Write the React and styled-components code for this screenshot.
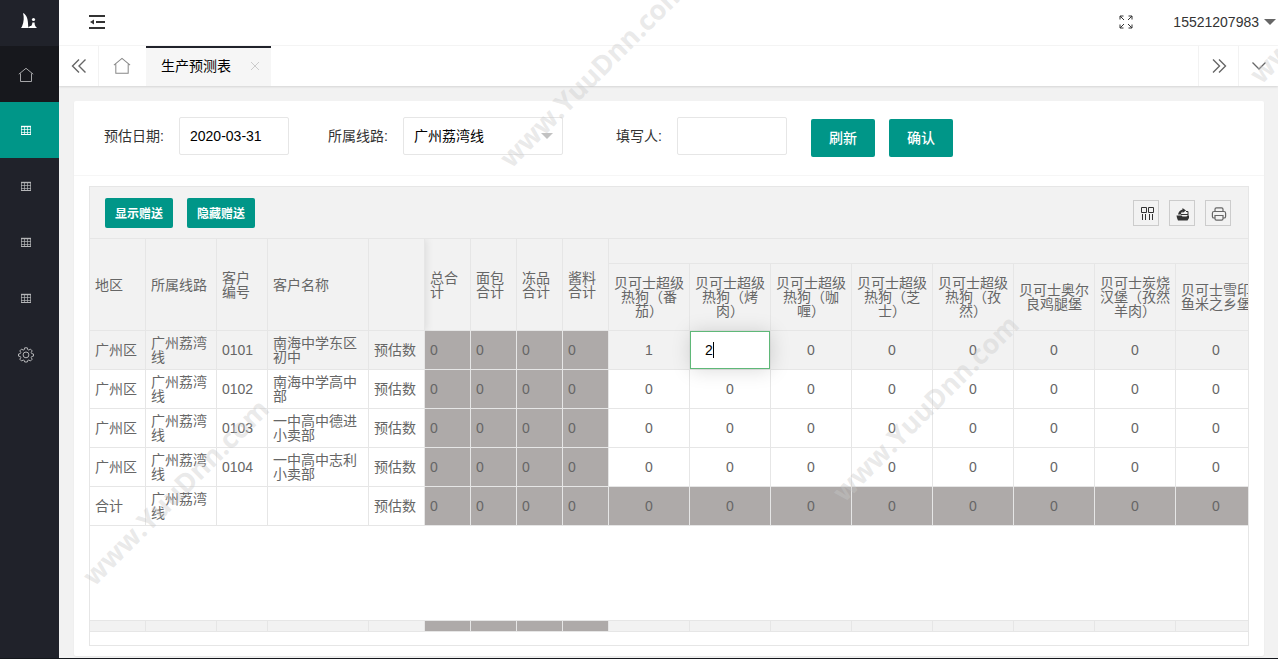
import React from 'react';
import styled, { createGlobalStyle } from 'styled-components';

const GlobalStyle = createGlobalStyle`
  * {
    box-sizing: border-box;
  }
  body {
    margin: 0;
    background: #f2f2f2;
    color: #333;
    font: 14px/24px "Liberation Sans", "Noto Sans CJK SC", sans-serif;
  }
  button, input, select {
    font-family: inherit;
    font-size: 14px;
    margin: 0;
  }
`;

const Page = styled.div`
  position: relative;
  display: flex;
  height: 100vh;
  overflow: hidden;
  border-bottom: 1px solid #14171c;
`;

const Sidebar = styled.nav`
  flex: 0 0 59px;
  background: #20222a;
`;

const Logo = styled.div`
  display: flex;
  align-items: center;
  justify-content: center;
  height: 46px;
  padding: 0 1px 4px 0;
`;

const SideLink = styled.a`
  display: flex;
  align-items: center;
  height: 56px;
  padding: 2px 0 0 18px;
  color: ${props => (props.$active ? '#fff' : '#b5b6b8')};
  background: ${props => (props.$active ? '#009688' : props.$open ? '#17181d' : 'transparent')};
`;

const Main = styled.div`
  flex: 1;
  min-width: 0;
  display: flex;
  flex-direction: column;
`;

const Header = styled.header`
  display: flex;
  align-items: center;
  justify-content: space-between;
  height: 46px;
  padding: 0 2px 2px 30px;
  background: #fff;
  border-bottom: 1px solid #f6f6f6;
`;

const HeaderRight = styled.div`
  display: flex;
  align-items: center;
  gap: 40px;
`;

const IconButton = styled.button`
  display: flex;
  padding: 0;
  border: 0;
  background: none;
  color: #333;
`;

const User = styled.a`
  display: flex;
  align-items: center;
  gap: 5px;
  color: #333;
  text-decoration: none;
`;

const Triangle = styled.span`
  border: 6px solid transparent;
  border-bottom: 0;
  border-top-color: ${props => props.color};
`;

const TabBar = styled.div`
  z-index: 1;
  display: flex;
  height: 40px;
  background: #fff;
  box-shadow: 0 1px 2px rgba(0, 0, 0, .12);
`;

const TabControl = styled.button`
  flex: 0 0 40px;
  display: flex;
  align-items: center;
  justify-content: center;
  padding: 0;
  color: #666;
  background: #fff;
  border: 0;
  border-${props => props.$side}: 1px solid #f2f2f2;
`;

const HomeTab = styled.a`
  flex: 0 0 47px;
  display: flex;
  align-items: center;
  justify-content: center;
  padding-right: 1px;
  color: #888;
`;

const Tab = styled.div`
  display: flex;
  align-items: center;
  gap: 19px;
  padding: 0 11px 2px 15px;
  color: #000;
  background: #f6f6f6;
  border-top: 2px solid #20222a;
`;

const Spacer = styled.div`
  flex: 1;
`;

const Card = styled.section`
  flex: 1;
  min-height: 0;
  display: flex;
  flex-direction: column;
  margin: 15px 14px 2px 15px;
  background: #fff;
  border-radius: 2px;
  box-shadow: 0 1px 2px rgba(0, 0, 0, .05);
`;

const Filters = styled.form`
  display: flex;
  align-items: flex-start;
  gap: 24px;
  padding: 16px 15px 18px 0;
  border-bottom: 1px solid #f6f6f6;
`;

const Field = styled.div`
  display: flex;

  &:first-child {
    margin-left: 15px;
  }
`;

const Label = styled.label`
  width: 90px;
  padding: 0 15px;
  line-height: 38px;
  text-align: right;
  white-space: nowrap;
`;

const Input = styled.input`
  width: 110px;
  height: 38px;
  padding: 0 10px;
  color: #000;
  background: #fff;
  border: 1px solid #e6e6e6;
  border-radius: 2px;
  outline: 0;
`;

const SelectBox = styled.div`
  position: relative;
  width: 160px;

  ${Triangle} {
    position: absolute;
    top: 16px;
    right: 10px;
    pointer-events: none;
  }
`;

const Select = styled.select`
  width: 100%;
  height: 38px;
  padding: 0 10px;
  color: #000;
  background: #fff;
  border: 1px solid #e6e6e6;
  border-radius: 2px;
  appearance: none;
`;

const Buttons = styled.div`
  display: flex;
  gap: 14px;
  padding-top: ${props => (props.$lowered ? '2px' : '0')};
`;

const Button = styled.button`
  height: 38px;
  padding: 0 18px 2px;
  color: #fff;
  font-weight: 500;
  background: #009688;
  border: 0;
  border-radius: 2px;
`;

const SmallButton = styled(Button)`
  height: 30px;
  padding: 0 10px 2px;
  font-size: 12px;
  font-weight: 700;
`;

const TableView = styled.div`
  flex: 1;
  min-height: 0;
  display: flex;
  flex-direction: column;
  margin: 10px 15px;
  padding-bottom: 13px;
  border: 1px solid #e6e6e6;
`;

const Toolbar = styled.div`
  display: flex;
  align-items: center;
  justify-content: space-between;
  padding: 11px 17px 10px 15px;
  background: #f2f2f2;
  border-bottom: 1px solid #e6e6e6;
`;

const Tools = styled.div`
  display: flex;
  gap: 10px;
`;

const Tool = styled.button`
  display: flex;
  align-items: center;
  justify-content: center;
  width: 26px;
  height: 26px;
  padding: 2px 0 0 2px;
  color: ${props => props.color || '#333'};
  background: none;
  border: 1px solid #ccc;
`;

const TableBody = styled.div`
  flex: 1;
  min-height: 0;
  overflow: hidden;
`;

const TotalBar = styled.div`
  overflow: hidden;
  border-top: 1px solid #e6e6e6;
`;

const Table = styled.table`
  width: 1167px;
  table-layout: fixed;
  border-spacing: 0;
  color: #666;
  line-height: 14px;
`;

const HeadCell = styled.th`
  height: ${props => (props.$group ? '25px' : '67px')};
  padding: 0 5px;
  font-weight: 400;
  text-align: ${props => (props.$center ? 'center' : 'left')};
  background: #f2f2f2;
  border: solid #e6e6e6;
  border-width: 0 1px 1px 0;
`;

/* right edge of the frozen columns */
const LastFixedHead = styled(HeadCell)`
  position: relative;
  box-shadow: 1px 0 8px rgba(0, 0, 0, .1);
  clip-path: inset(0 -10px 0 0);
`;

const Row = styled.tr`
  background: ${props => (props.$hover ? '#f2f2f2' : '#fff')};
`;

const Cell = styled.td`
  height: ${props => (props.$thin ? '11px' : '39px')};
  padding: 0 5px;
  text-align: ${props => (props.$center ? 'center' : 'left')};
  background: ${props => (props.$gray ? '#aeaaa9' : 'transparent')};
  border: solid #e6e6e6;
  border-width: 0 1px 1px 0;
`;

const EditCell = styled(Cell)`
  position: relative;
  padding: 0;

  /* text caret */
  &::after {
    content: '';
    position: absolute;
    top: 11px;
    left: 23px;
    width: 1px;
    height: 16px;
    background: #000;
  }
`;

const EditInput = styled.input`
  display: block;
  width: 100%;
  height: 38px;
  padding: 0 14px;
  color: #000;
  caret-color: transparent;
  background: #fff;
  border: 1px solid #5fb878;
  border-radius: 0;
  outline: 0;
  box-shadow: 1px 1px 20px rgba(0, 0, 0, .15);
`;

const Watermark = styled.span`
  position: absolute;
  z-index: 2;
  left: ${props => props.$x}px;
  top: ${props => props.$y}px;
  color: rgba(200, 200, 200, .4);
  font: 700 27px/28px "Open Sans", sans-serif;
  transform: rotate(-45deg);
  transform-origin: 0 100%;
  pointer-events: none;
`;

const HomeIcon = ({ size }) => (
  <svg width={size} height={size} viewBox="0 0 16 16" fill="none" stroke="currentColor" strokeWidth=".9">
    <path d="M.8 7.200 8 1.300l7.200 5.900M2.500 6.400v8.100h11V6.400" />
  </svg>
);

const TableIcon = () => (
  <svg width="16" height="16" viewBox="0 0 16 16" fill="none" stroke="currentColor">
    <path d="M3 3.500h10" strokeWidth="1.400" />
    <path d="M3 6.500h10M3 9.500h10M3.500 3v9M6.500 3v9M9.500 3v9M12.500 3v9" opacity=".7" />
    <path d="M3 11.500h10" />
  </svg>
);

const GearIcon = () => (
  <svg width="16" height="16" viewBox="0 0 16 16" fill="none" stroke="currentColor">
    <path d="M6.700 .8h2.600l.4 1.800 1.100.5 1.600-1 1.800 1.800-1 1.600.5 1.100 1.800.4v2.100l-1.800.4-.5 1.100 1 1.600-1.800 1.800-1.600-1-1.100.5-.4 1.500H6.700l-.4-1.500-1.100-.5-1.600 1-1.800-1.800 1-1.600-.5-1.100-1.800-.4V7l1.800-.4.500-1.100-1-1.600 1.800-1.800 1.600 1 1.100-.5z" />
    <circle cx="8" cy="7.900" r="2.900" />
  </svg>
);

const LogoIcon = () => (
  <svg width="16" height="16" viewBox="0 0 16 16" fill="#fff">
    <path d="M2 0C6 2 7 6 7.200 13.200L8 15H0l1-1.500C3 9 3.200 4 2 0z" />
    <path d="M8 13.500c2 0 3-.5 3.400-4h2.200c0 2.500.5 3.700 2.400 5.500H8z" />
    <circle cx="12.500" cy="6.500" r="1.600" />
  </svg>
);

const MenuIcon = () => (
  <svg width="16" height="14" viewBox="0 0 16 14" fill="none" stroke="currentColor" strokeWidth="2">
    <path d="M0 1h16M7 7h9M0 13h16" />
    <path d="M1 7l4-2.500v5z" fill="currentColor" stroke="none" />
  </svg>
);

const FullScreenIcon = () => (
  <svg width="14" height="14" viewBox="0 0 14 14" fill="none" stroke="currentColor">
    <path d="M1 4.500V1h3.500M1 1l4 4M9.500 1H13v3.500M13 1 9 5M1 9.500V13h3.500M1 13l4-4M13 9.500V13H9.500M13 13 9 9" />
  </svg>
);

const DoubleChevron = ({ right }) => (
  <svg width="16" height="16" viewBox="0 0 16 16" fill="none" stroke="currentColor" strokeWidth="1.400">
    {right
      ? <path d="M2 1.500 8.500 8 2 14.500M8 1.500 14.500 8 8 14.500" />
      : <path d="M8 1.500 1.500 8 8 14.500M14.500 1.500 8 8l6.500 6.500" />}
  </svg>
);

const DownIcon = () => (
  <svg width="16" height="16" viewBox="0 0 16 16" fill="none" stroke="currentColor" strokeWidth="1.300">
    <path d="M1.500 4.500 8 11l6.500-6.500" />
  </svg>
);

const CloseIcon = () => (
  <svg width="10" height="10" viewBox="0 0 10 10" fill="none" stroke="#ccc">
    <path d="M1 1l8 8M9 1 1 9" />
  </svg>
);

const ColumnsIcon = () => (
  <svg width="14" height="14" viewBox="0 0 14 14" fill="none" stroke="currentColor">
    <path d="M1.500 .5h5v5h-5zM8.500 .5h5v5h-5zM2.500 7v6M5.500 7v6M9.500 7v6M12.500 7v6" />
  </svg>
);

const ExportIcon = () => (
  <svg width="14" height="14" viewBox="0 0 14 14" fill="currentColor">
    <path d="M.5 8.500h5l1 1h4l1-1H13V11l-1.500 2.500H2L1 11z" />
    <path d="M2 7.500C2.500 5 4 3 6.500 2.500V1l3.500 2.500L6.500 6V4.500C5.500 5 5 6 5 7.500z" />
    <path d="M10 4.500h2v4M5 7.500h7" fill="none" stroke="currentColor" />
  </svg>
);

const PrintIcon = () => (
  <svg width="16" height="16" viewBox="0 0 16 16" fill="none" stroke="currentColor" strokeWidth="1.200">
    <path d="M4 5.500V3.200Q4 1.800 5.400 1.800h5.200Q12 1.800 12 3.200v2.300" />
    <path d="M4 12H3q-1.600 0-1.600-1.600V7.200q0-1.700 1.600-1.700h10q1.600 0 1.600 1.700v3.200Q14.600 12 13 12h-1" />
    <path d="M4 9.500h8v3.300q0 1.400-1.400 1.400H5.400Q4 14.200 4 12.800z" />
  </svg>
);

const widths = [56, 71, 51, 101, 56, 46, 46, 46, 46, 81, 81, 81, 81, 81, 81, 81, 81];

const infoHeads = ['地区', '所属线路', '客户编号', '客户名称'];
const sumHeads = ['总合计', '面包合计', '冻品合计', '酱料合计'];
const products = [
  '贝可士超级热狗（番茄）',
  '贝可士超级热狗（烤肉）',
  '贝可士超级热狗（咖喱）',
  '贝可士超级热狗（芝士）',
  '贝可士超级热狗（孜然）',
  '贝可士奥尔良鸡腿堡',
  '贝可士炭烧汉堡（孜然羊肉）',
  '贝可士雪印鱼米之乡堡',
];

const rows = [
  { info: ['广州区', '广州荔湾线', '0101', '南海中学东区初中', '预估数'], counts: [1, 2, 0, 0, 0, 0, 0, 0], editing: 1 },
  { info: ['广州区', '广州荔湾线', '0102', '南海中学高中部', '预估数'], counts: [0, 0, 0, 0, 0, 0, 0, 0] },
  { info: ['广州区', '广州荔湾线', '0103', '一中高中德进小卖部', '预估数'], counts: [0, 0, 0, 0, 0, 0, 0, 0] },
  { info: ['广州区', '广州荔湾线', '0104', '一中高中志利小卖部', '预估数'], counts: [0, 0, 0, 0, 0, 0, 0, 0] },
  { info: ['合计', '广州荔湾线', '', '', '预估数'], counts: [0, 0, 0, 0, 0, 0, 0, 0], total: true },
];

const Cols = () => (
  <colgroup>
    {widths.map((width, i) => <col key={i} width={width} />)}
  </colgroup>
);

const ForecastTable = () => (
  <Table>
    <Cols />
    <thead>
      <tr>
        {infoHeads.map(text => <HeadCell key={text} rowSpan={2}>{text}</HeadCell>)}
        <LastFixedHead rowSpan={2} />
        {sumHeads.map(text => <HeadCell key={text} rowSpan={2}>{text}</HeadCell>)}
        <HeadCell $group colSpan={8} />
      </tr>
      <tr>
        {products.map(text => <HeadCell key={text} $center>{text}</HeadCell>)}
      </tr>
    </thead>
    <tbody>
      {rows.map((row, n) => (
        <Row key={n} $hover={n === 0}>
          {row.info.map((text, i) => <Cell key={i}>{text}</Cell>)}
          {sumHeads.map(text => <Cell key={text} $gray>0</Cell>)}
          {row.counts.map((count, i) => (
            row.editing === i
              ? (
                <EditCell key={i}>
                  <EditInput aria-label={products[i]} defaultValue={count} />
                </EditCell>
              )
              : <Cell key={i} $center $gray={row.total}>{count}</Cell>
          ))}
        </Row>
      ))}
    </tbody>
  </Table>
);

const TotalTable = () => (
  <Table>
    <Cols />
    <tbody>
      <Row $hover>
        {widths.map((width, i) => <Cell key={i} $thin $gray={i > 4 && i < 9} />)}
      </Row>
    </tbody>
  </Table>
);

const App = () => (
  <>
    <GlobalStyle />
    <Page>
      <Sidebar>
        <Logo><LogoIcon /></Logo>
        <SideLink href="#home" $open aria-label="home"><HomeIcon size={16} /></SideLink>
        <SideLink href="#forecast" $active aria-label="forecast"><TableIcon /></SideLink>
        <SideLink href="#orders" aria-label="orders"><TableIcon /></SideLink>
        <SideLink href="#stock" aria-label="stock"><TableIcon /></SideLink>
        <SideLink href="#reports" aria-label="reports"><TableIcon /></SideLink>
        <SideLink href="#settings" aria-label="settings"><GearIcon /></SideLink>
      </Sidebar>
      <Main>
        <Header>
          <IconButton aria-label="menu"><MenuIcon /></IconButton>
          <HeaderRight>
            <IconButton aria-label="full screen"><FullScreenIcon /></IconButton>
            <User href="#user">
              15521207983
              <Triangle color="#666" />
            </User>
          </HeaderRight>
        </Header>
        <TabBar>
          <TabControl $side="right" aria-label="previous"><DoubleChevron /></TabControl>
          <HomeTab href="#home" aria-label="home"><HomeIcon size={18} /></HomeTab>
          <Tab>
            生产预测表
            <IconButton aria-label="close"><CloseIcon /></IconButton>
          </Tab>
          <Spacer />
          <TabControl $side="left" aria-label="next"><DoubleChevron right /></TabControl>
          <TabControl $side="left" aria-label="more"><DownIcon /></TabControl>
        </TabBar>
        <Card>
          <Filters onSubmit={e => e.preventDefault()}>
            <Field>
              <Label htmlFor="date">预估日期:</Label>
              <Input id="date" defaultValue="2020-03-31" />
            </Field>
            <Field>
              <Label htmlFor="line">所属线路:</Label>
              <SelectBox>
                <Select id="line">
                  <option>广州荔湾线</option>
                </Select>
                <Triangle color="#c2c2c2" />
              </SelectBox>
            </Field>
            <Field>
              <Label htmlFor="writer">填写人:</Label>
              <Input id="writer" />
            </Field>
            <Buttons $lowered>
              <Button>刷新</Button>
              <Button>确认</Button>
            </Buttons>
          </Filters>
          <TableView>
            <Toolbar>
              <Buttons>
                <SmallButton>显示赠送</SmallButton>
                <SmallButton>隐藏赠送</SmallButton>
              </Buttons>
              <Tools>
                <Tool aria-label="columns"><ColumnsIcon /></Tool>
                <Tool aria-label="export"><ExportIcon /></Tool>
                <Tool aria-label="print" color="#666"><PrintIcon /></Tool>
              </Tools>
            </Toolbar>
            <TableBody><ForecastTable /></TableBody>
            <TotalBar><TotalTable /></TotalBar>
          </TableView>
        </Card>
      </Main>
      <Watermark $x={514} $y={144}>www.YuuDnn.com</Watermark>
      <Watermark $x={1264} $y={60}>www.YuuDnn.com</Watermark>
      <Watermark $x={97} $y={562}>www.YuuDnn.com</Watermark>
      <Watermark $x={847} $y={478}>www.YuuDnn.com</Watermark>
    </Page>
  </>
);

export default App;
